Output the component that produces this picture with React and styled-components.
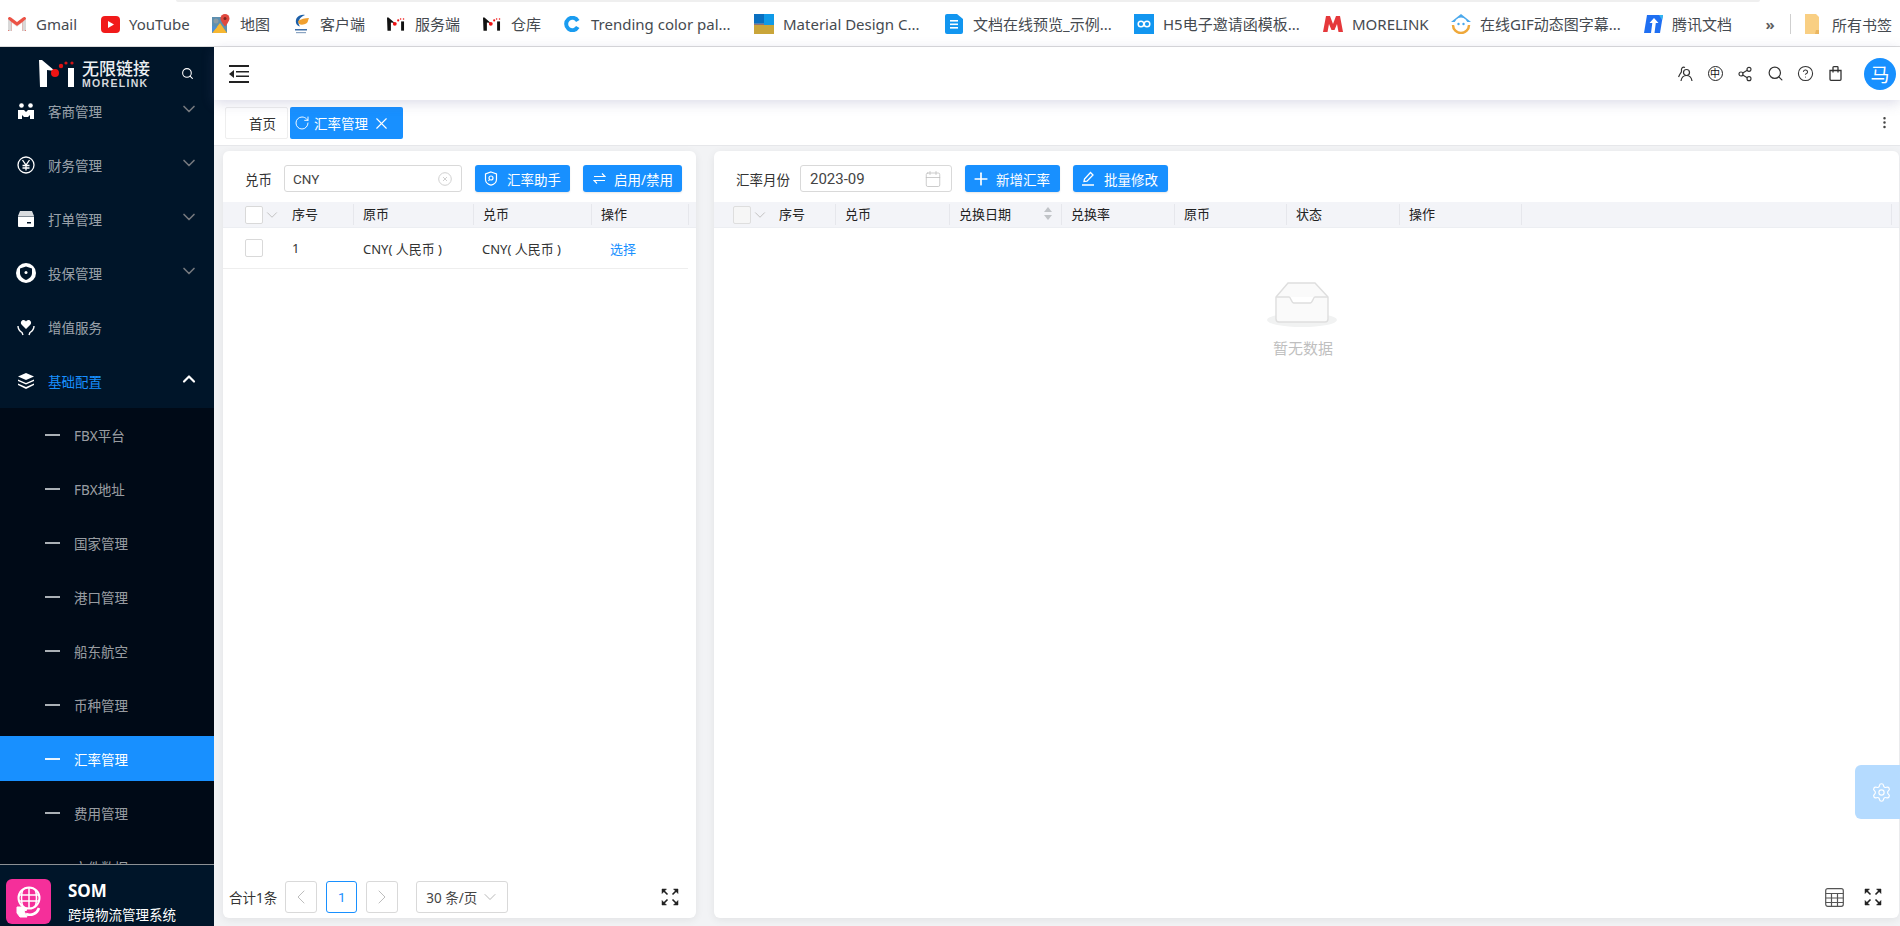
import React from "react";
import styled, { createGlobalStyle } from "styled-components";
import { Search, ChevronDown, ChevronUp, ChevronLeft, ChevronRight, X, RotateCw, Plus, Calendar, EllipsisVertical, Settings, Share2, CircleHelp } from "lucide-react";

const Global = createGlobalStyle`
  html, body { margin: 0; padding: 0; height: 100%; overflow: hidden; }
  * { box-sizing: border-box; }
  body { font-family: "Noto Sans", "Noto Sans CJK SC", sans-serif; background: #fff; }
`;

const Shell = styled.div`
  width: 1900px; height: 926px; display: flex; flex-direction: column; position: relative; overflow: hidden;
`;
const TopStrip = styled.div`
  height: 2px; margin-left: 176px; width: 1584px; background: #efefef; border-radius: 0 0 4px 4px; flex: none;
`;
const BookmarkBar = styled.div`
  height: 45px; flex: none; display: flex; align-items: center; padding-left: 7px; border-bottom: 1px solid #dcdcdc; background: #fff;
  font-size: 15px; color: #454a50; white-space: nowrap;
`;
const Bookmark = styled.div`
  width: ${p => p.$w}px; display: flex; align-items: center; gap: 9px; flex: none; line-height: 20px;
`;
const FavBox = styled.span`
  width: 20px; height: 20px; display: flex; align-items: center; justify-content: center; flex: none;
`;
const More = styled.span`
  width: 14px; text-align: center; margin-right: 13px; font-size: 15px; font-weight: 700; color: #5f5f5f; line-height: 20px;
`;
const BarSep = styled.span`
  width: 1px; height: 20px; background: #cfcfcf; margin-right: 13px;
`;
const AllMarks = styled.div`
  display: flex; align-items: center; gap: 12px;
`;
const Body = styled.div`
  flex: 1; display: flex; min-height: 0;
`;
const Sidebar = styled.aside`
  width: 214px; flex: none; display: flex; flex-direction: column; background: #001529; min-height: 0;
`;
const Brand = styled.div`
  height: 53px; flex: none; display: flex; align-items: flex-start; padding: 13px 0 0 39px; gap: 6px; position: relative; z-index: 1; background: #001529;
`;
const BrandText = styled.div`
  display: flex; flex-direction: column; width: 70px; color: #eceff2;
`;
const BrandCn = styled.span`
  font-size: 17px; line-height: 18px; font-weight: 500; letter-spacing: 0; white-space: nowrap;
`;
const BrandEn = styled.span`
  font-size: 10.5px; line-height: 11px; font-weight: 700; letter-spacing: 1.3px; font-family: "Liberation Sans", sans-serif; color: #d5d8dc; white-space: nowrap;
`;
const BrandSearch = styled.span`
  display: flex; margin: 7px 0 0 23px; color: #fff;
`;
const MenuScroll = styled.nav`
  flex: 1; min-height: 0; overflow: hidden;
`;
const MenuInner = styled.div`
  margin-top: -16px;
`;
const MenuItem = styled.div`
  height: 54px; display: flex; align-items: center; padding-left: 18px; gap: 14px; font-size: 13.5px;
  color: ${p => (p.$active ? "#1890ff" : "rgba(255,255,255,.62)")};
`;
const MenuIcon = styled.span`
  width: 16px; height: 20px; display: flex; align-items: center; justify-content: center; color: #fff; flex: none;
  svg { flex: none; }
`;
const Caret = styled.span`
  margin-left: auto; margin-right: 15px; display: flex; position: relative; top: -2px; color: ${p => (p.$open ? "#fff" : "#74787d")};
`;
const SubMenu = styled.div`
  background: #000a17; padding-top: 4px; display: flex; flex-direction: column; gap: 9px;
`;
const SubItem = styled.div`
  height: 45px; flex: none; display: flex; align-items: center; padding-left: 45px; gap: 14px; font-size: 13.5px;
  background: ${p => (p.$active ? "#1890ff" : "transparent")};
  color: ${p => (p.$active ? "#fff" : "rgba(255,255,255,.62)")};
`;
const Dash = styled.i`
  width: 15px; height: 2px; background: ${p => (p.$active ? "#e8f4ff" : "#aab0b6")}; flex: none;
`;
const SideFooter = styled.div`
  height: 62px; flex: none; display: flex; background: #001529; border-top: 1px solid #8c9094; padding: 14px 0 0 6px; gap: 17px;
`;
const AppBadge = styled.div`
  width: 45px; height: 45px; border-radius: 6px; background: #f52f9a; display: flex; align-items: center; justify-content: center; flex: none;
`;
const AppName = styled.div`
  display: flex; flex-direction: column; color: #fff;
`;
const AppTitle = styled.span`
  font-size: 17px; font-weight: 700; line-height: 24px;
`;
const AppDesc = styled.span`
  font-size: 13.5px; line-height: 18px; margin-top: 3px; white-space: nowrap;
`;
const Main = styled.div`
  flex: 1; min-width: 0; display: flex; flex-direction: column;
`;
const Header = styled.header`
  height: 53px; flex: none; display: flex; align-items: center; padding: 0 4px 0 15px; background: #fff; position: relative; z-index: 2;
  box-shadow: 0 3px 12px rgba(90,90,150,.22);
`;
const HeaderIcons = styled.div`
  margin-left: auto; display: flex; align-items: center; color: #333;
`;
const HeaderIcon = styled.span`
  width: 30px; display: flex; justify-content: center; align-items: center;
`;
const LangBadge = styled.span`
  width: 15px; height: 15px; border-radius: 50%; border: 1.3px solid #222; font-size: 10px; line-height: 12px; text-align: center; color: #111; display: block;
`;
const Avatar = styled.span`
  width: 32px; height: 32px; border-radius: 50%; background: #1890ff; color: #fff; font-size: 19px; display: flex; align-items: center; justify-content: center; margin-left: 14px;
`;
const TabsBar = styled.div`
  height: 46px; flex: none; display: flex; padding: 7px 8px 0 11px; gap: 2px; background: #fff; border-bottom: 1px solid #e6e7ea;
`;
const HomeTab = styled.div`
  width: 63px; height: 32px; border: 1px solid #eeeeee; border-radius: 2px; font-size: 13.5px; color: #333; display: flex; align-items: center; padding-left: 23px;
`;
const ActiveTab = styled.div`
  width: 113px; height: 32px; background: #1890ff; border-radius: 2px; color: #fff; font-size: 13.5px; display: flex; align-items: center; padding-left: 4px; gap: 4px;
`;
const TabMenu = styled.span`
  margin-left: auto; display: flex; height: 31px; align-items: center; color: #444;
`;
const Page = styled.div`
  flex: 1; min-height: 0; display: flex; background: #f2f3f5; padding: 5px 1px 8px 9px; gap: 18px;
`;
const Panel = styled.section`
  ${p => (p.$w ? `width:${p.$w}px;flex:none;` : "flex:1;min-width:0;")}
  background: #fff; border-radius: 6px; box-shadow: 0 2px 8px rgba(0,0,0,.07); display: flex; flex-direction: column; overflow: hidden;
`;
const Toolbar = styled.div`
  height: 51px; flex: none; padding: 4px 0 0 22px; display: flex; align-items: center; gap: 13px; font-size: 13.5px; color: #333;
`;
const Field = styled.div`
  display: flex; align-items: center; gap: ${p => p.$gap}px;
`;
const Label = styled.span`
  white-space: nowrap;
`;
const InputBox = styled.div`
  width: ${p => p.$w}px; height: 27px; border: 1px solid #d9d9d9; border-radius: 3px; padding: 0 9px 0 ${p => p.$pl}px; display: flex; align-items: center; justify-content: space-between; font-size: ${p => p.$fs}px; color: #444; font-family: Roboto, "Noto Sans", sans-serif;
`;
const ActionButton = styled.button`
  width: ${p => p.$w}px; height: 27px; border: 0; border-radius: 3px; background: #1890ff; color: #fff; font: inherit; font-size: 13.5px; display: flex; align-items: center; justify-content: flex-start; gap: ${p => p.$gap}px; padding: 0 0 0 ${p => p.$pl}px; box-shadow: 0 1px 2px rgba(0,0,0,.1);
`;
const TableHead = styled.div`
  height: 26px; flex: none; display: flex; align-items: center; background: #f3f4f8; border-bottom: 1px solid #eceef2; font-size: 13px; color: #222;
`;
const SelectCell = styled.div`
  width: ${p => p.$w}px; flex: none; display: flex; align-items: center; padding-left: ${p => p.$pl}px; color: #c0c0c0;
`;
const HeadCell = styled.div`
  width: ${p => p.$w}px; flex: none; height: 21px; line-height: 21px; padding-left: 9px; border-right: 1px solid #e6e7ec; display: flex; align-items: center; white-space: nowrap; position: relative;
`;
const Check = styled.span`
  width: 18px; height: 18px; border: 1px solid ${p => (p.$muted ? "#dedede" : "#d9d9d9")}; border-radius: 2px; background: ${p => (p.$muted ? "#f6f6f6" : "#fff")}; display: block; flex: none;
`;
const SortMark = styled.span`
  position: absolute; right: 9px; top: 3px; display: flex; flex-direction: column; gap: 3px;
`;
const SortUp = styled.i`
  width: 0; height: 0; border: 4px solid transparent; border-top: 0; border-bottom: 5px solid #c0c3c7;
`;
const SortDown = styled.i`
  width: 0; height: 0; border: 4px solid transparent; border-bottom: 0; border-top: 5px solid #c0c3c7;
`;
const Row = styled.div`
  height: 41px; flex: none; display: flex; align-items: center; border-bottom: 1px solid #eeeeee; margin-right: 8px; font-size: 13px; color: #333;
`;
const RowCell = styled.div`
  width: ${p => p.$w}px; flex: none; padding-left: ${p => p.$pl || 9}px; white-space: pre; color: ${p => (p.$link ? "#1890ff" : "inherit")};
`;
const Spacer = styled.div`
  flex: 1; min-height: 0;
`;
const Empty = styled.div`
  flex: 1; min-height: 0; display: flex; flex-direction: column; align-items: center; padding: 54px 7px 0 0; color: #bfbfbf; font-size: 15px;
`;
const EmptyText = styled.span`
  margin-top: 9px; line-height: 22px;
`;
const PanelFooter = styled.div`
  height: 42px; flex: none; display: flex; align-items: center; padding: 0 17px 0 6px; font-size: 13.5px; color: #333;
`;
const Total = styled.span`
  margin-right: 8px; white-space: nowrap;
`;
const PageBtn = styled.span`
  width: ${p => p.$w}px; height: 32px; border: 1px solid ${p => (p.$on ? "#1890ff" : "#d9d9d9")}; border-radius: 3px; display: flex; align-items: center; justify-content: center; margin-right: ${p => p.$mr}px; color: ${p => (p.$on ? "#1890ff" : "#bdbdbd")}; font-size: 13.5px; font-family: Roboto, sans-serif;
`;
const SizeSelect = styled.div`
  width: 92px; height: 32px; border: 1px solid #d9d9d9; border-radius: 3px; display: flex; align-items: center; padding-left: 9px; gap: 3px; color: #444; white-space: nowrap;
`;
const FooterTools = styled.div`
  margin-left: auto; display: flex; align-items: center; gap: 20px; color: #222;
`;
const GearTab = styled.div`
  position: absolute; right: 0; top: 765px; width: 45px; height: 54px; background: #b5dbff; border-radius: 6px 0 0 6px; display: flex; align-items: center; justify-content: center; color: #fff; padding-left: 8px; z-index: 3;
`;

/* ---- drawings ---- */
const MLogo = ({ size = 20 }) => (
  <svg width={size} height={size * 0.9} viewBox="0 0 37 27">
    <polygon points="0,0 3,0 16,11 8,10 8,27 1,27" fill="#111" />
    <rect x="29" y="8" width="6" height="19" fill="#111" />
    <circle cx="16" cy="13" r="4" fill="#e11" />
    <circle cx="23" cy="6" r="2.2" fill="#e11" />
    <circle cx="28" cy="3" r="1.6" fill="#e11" />
    <circle cx="34" cy="3" r="1.6" fill="#e11" />
  </svg>
);
const favicons = {
  gmail: (
    <svg width="20" height="16" viewBox="0 0 20 16">
      <path d="M1 15V3l9 7 9-7v12h-4V7l-5 4-5-4v8z" fill="#e9e9e9" />
      <path d="M1 15V2.500C1 1 3 .5 4 1.500L10 6l6-4.500c1-1 3-.5 3 1V15h-3.500V6L10 10 4.500 6v9z" fill="#ea4335" opacity=".92" />
      <path d="M4.500 6v9h-2L1 14V3z" fill="#d8d8d8" />
      <path d="M15.500 6v9h2l1.500-1V3z" fill="#d8d8d8" />
    </svg>
  ),
  youtube: (
    <svg width="19" height="19" viewBox="0 0 19 19">
      <rect x="0" y="1" width="19" height="17" rx="4" fill="#f11a1a" />
      <polygon points="7,6 13,9.500 7,13" fill="#fff" />
    </svg>
  ),
  map: (
    <svg width="20" height="20" viewBox="0 0 20 20">
      <rect x="1" y="3" width="15" height="16" fill="#5c8fb0" />
      <polygon points="1,19 9,9 16,19" fill="#f7b731" />
      <polygon points="1,19 1,12 6,13" fill="#4c8fd8" />
      <circle cx="5" cy="7" r="2.500" fill="#8a9aa5" />
      <path d="M14 0a4.500 4.500 0 0 1 4.500 4.500c0 3-4.500 8-4.500 8s-4.500-5-4.500-8A4.500 4.500 0 0 1 14 0z" fill="#e0483e" />
      <circle cx="14" cy="4.500" r="1.500" fill="#7d2620" />
    </svg>
  ),
  client: (
    <svg width="16" height="20" viewBox="0 0 16 20">
      <path d="M12 1C6 0 2 4 3 9c.5 2 2 3 4 3.500C4 9 6 3 12 1z" fill="#1c5fa8" />
      <path d="M5 7c3-2 7-3 11-3-1 2-1 4-2 5-3 2-6 2-8 1z" fill="#f0a030" />
      <rect x="2" y="15" width="12" height="1.500" fill="#3c6ea8" />
      <rect x="3" y="18" width="10" height="1.200" fill="#8aa4c2" />
    </svg>
  ),
  m: <MLogo size={18} />,
  c: (
    <svg width="16" height="16" viewBox="0 0 18 18">
      <path d="M15.500 5.500A7 7 0 1 0 15.500 12.500" fill="none" stroke="#1a9cf0" strokeWidth="4.500" />
    </svg>
  ),
  material: (
    <svg width="20" height="20" viewBox="0 0 20 20">
      <rect width="20" height="11" fill="#0f9ae8" />
      <rect x="0" width="10" height="9" fill="#0a6fc0" />
      <rect y="11" width="20" height="9" fill="#c9a53a" />
      <rect y="9.500" width="10" height="1.500" fill="#8d6e7a" />
    </svg>
  ),
  doc: (
    <svg width="18" height="20" viewBox="0 0 18 20">
      <path d="M2 0h10l6 5v13a2 2 0 0 1-2 2H2a2 2 0 0 1-2-2V2a2 2 0 0 1 2-2z" fill="#1296f0" />
      <rect x="5" y="6" width="8" height="1.600" fill="#fff" />
      <rect x="5" y="9.500" width="8" height="1.600" fill="#fff" />
      <rect x="5" y="13" width="8" height="1.600" fill="#fff" />
    </svg>
  ),
  h5: (
    <svg width="20" height="20" viewBox="0 0 20 20">
      <rect width="20" height="20" fill="#1296f0" />
      <circle cx="7" cy="10" r="2.800" fill="none" stroke="#fff" strokeWidth="1.500" />
      <circle cx="13" cy="10" r="2.800" fill="none" stroke="#fff" strokeWidth="1.500" />
    </svg>
  ),
  red: (
    <svg width="20" height="16" viewBox="0 0 20 16">
      <path d="M0 16 3 0h4l3 8 3-8h4l3 16h-4.500L14 8l-2.500 6h-3L6 8l-1.500 8z" fill="#e5383b" />
    </svg>
  ),
  house: (
    <svg width="20" height="20" viewBox="0 0 20 20">
      <path d="M10 0 20 8H0z" fill="#4aa8ec" />
      <path d="M2 11a8 8 0 0 0 16 0" fill="none" stroke="#efa83a" strokeWidth="2.500" />
      <circle cx="10" cy="10" r="6.500" fill="#fff" />
      <circle cx="7.500" cy="10" r="1.200" fill="#4aa8ec" />
      <circle cx="12.500" cy="10" r="1.200" fill="#4aa8ec" />
    </svg>
  ),
  tencent: (
    <svg width="19" height="18" viewBox="0 0 19 18">
      <polygon points="3,0 19,0 16,18 0,18" fill="#1f6ff2" />
      <polygon points="15,0 19,0 18,5" fill="#33b7f0" />
      <polygon points="10,3 14.500,8 11.800,8 10.500,18 7,18 8.300,8 5.500,8" fill="#fff" />
    </svg>
  ),
};
const Folder = () => (
  <svg width="16" height="21" viewBox="0 0 16 21">
    <path d="M1 0h11l3 3v17H1z" fill="#f9cf83" />
    <path d="M12 16h3v4h-4z" fill="#eab660" />
  </svg>
);
const BrandMark = () => (
  <svg width="37" height="27" viewBox="0 0 37 27">
    <polygon points="0,0 3,0 16,11 8,10 8,27 1,27" fill="#fff" />
    <rect x="29" y="8" width="6" height="19" fill="#fff" />
    <circle cx="16" cy="13" r="4" fill="#f01414" />
    <circle cx="22" cy="6" r="2.200" fill="#e01414" />
    <circle cx="27" cy="3" r="1.600" fill="#d01414" />
    <circle cx="33" cy="3" r="1.600" fill="#d01414" />
  </svg>
);
const PeopleIcon = () => (
  <svg width="16" height="16" viewBox="0 0 16 16" fill="#fff">
    <circle cx="3.500" cy="2.500" r="2.300" /><circle cx="12.500" cy="2.500" r="2.300" />
    <path d="M0 7h6l2 2 2-2h6v9h-4v-4l-2 2h-4l-2-2v4H0z" />
  </svg>
);
const YenIcon = () => (
  <svg width="18" height="18" viewBox="0 0 18 18" fill="none" stroke="#fff">
    <circle cx="9" cy="9" r="8" strokeWidth="1.300" />
    <path d="M5.500 4 9 9l3.500-5M5.500 9.500h7M5.500 12h7M9 9v5.500" strokeWidth="1.300" />
  </svg>
);
const BoxIcon = () => (
  <svg width="16" height="16" viewBox="0 0 16 16">
    <path d="M2 0h12l2 5H0z" fill="#fff" opacity=".85" />
    <path d="M0 5.500h16V15a1 1 0 0 1-1 1H1a1 1 0 0 1-1-1z" fill="#fff" />
    <rect x="9" y="11" width="4" height="1.500" fill="#001529" />
  </svg>
);
const ShieldIcon = () => (
  <svg width="20" height="20" viewBox="0 0 20 20">
    <circle cx="10" cy="10" r="10" fill="#fff" />
    <path d="M10 3.500l6 2v4.500c0 3.500-2.500 5.500-6 7-3.500-1.500-6-3.500-6-7V5.500z" fill="#001529" />
    <circle cx="10" cy="9.500" r="1.500" fill="#fff" />
  </svg>
);
const CareIcon = () => (
  <svg width="18" height="18" viewBox="0 0 18 18">
    <path d="M9 11 4.500 6.500C3 4.500 4.500 2 6.500 2 7.800 2 8.600 2.800 9 3.500 9.400 2.800 10.200 2 11.500 2c2 0 3.500 2.500 2 4.500z" fill="#fff" />
    <path d="M1 8c0 3.500 1.500 5 4 6.500L6 17M17 8c0 3.500-1.500 5-4 6.500L12 17" fill="none" stroke="#fff" strokeWidth="1.400" />
  </svg>
);
const LayersIcon = () => (
  <svg width="16" height="16" viewBox="0 0 16 16" fill="#fff">
    <path d="M8 0 16 3.500 8 7 0 3.500z" />
    <path d="M0 6.500 8 10l8-3.500v1.500L8 11.500 0 8z" />
    <path d="M0 10.500 8 14l8-3.500V12l-8 4-8-4z" />
  </svg>
);
const GlobeIcon = () => (
  <svg width="30" height="32" viewBox="0 0 30 32" fill="none" stroke="#fff">
    <circle cx="15" cy="12" r="10.500" strokeWidth="2" fill="#f52f9a" />
    <path d="M4.500 9h21M5 15h20M15 1.500v21M9 3c-2 5-2 13 0 18M21 3c2 5 2 13 0 18" strokeWidth="1.500" />
    <path d="M3 21h6l4 3-3 1 3 6H6l-3-4z" fill="#fff" stroke="#fff" />
    <path d="M12 28c5 2 11 0 13-6" strokeWidth="2.500" />
  </svg>
);
const CollapseIcon = () => (
  <svg width="20" height="18" viewBox="0 0 20 18" fill="#222">
    <rect width="20" height="2" /><rect y="16" width="20" height="2" />
    <rect x="7" y="6" width="13" height="1.500" /><rect x="7" y="10.500" width="13" height="1.500" />
    <path d="M5 5v8L0 9z" />
  </svg>
);
const PeopleLine = () => (
  <svg width="16" height="16" viewBox="0 0 16 16" fill="none" stroke="#333" strokeWidth="1.200">
    <circle cx="9.500" cy="6.500" r="3" />
    <path d="M4 15c.5-3.500 2.500-5.500 5.500-5.500s5 2 5.500 5.500" />
    <path d="M8 1.500C5.500 .5 4 2.500 4.500 5c.2 1.200-1 2-1.500 3-.4.700-1 2-1.500 3" />
  </svg>
);
const BagIcon = () => (
  <svg width="13" height="15" viewBox="0 0 13 15" fill="none" stroke="#333" strokeWidth="1.300">
    <path d="M1 4.500h11v8.800a1 1 0 0 1-1 1H2a1 1 0 0 1-1-1z" />
    <path d="M4 6.500V1.500a.8.8 0 0 1 .8-.8h3.400a.8.8 0 0 1 .8.8v5" />
  </svg>
);
const ShieldOutline = () => (
  <svg width="14" height="15" viewBox="0 0 14 15" fill="none" stroke="#fff" strokeWidth="1.200">
    <path d="M7 1l5.500 2v5.500C12.500 11 10 13.500 7 14.200 4 13.500 1.500 11 1.500 8.500V3z" />
    <circle cx="7" cy="7" r="2" />
    <path d="M5.500 8.500 4.500 10" />
  </svg>
);
const SwapIcon = () => (
  <svg width="13" height="13" viewBox="0 0 13 13" fill="none" stroke="#fff" strokeWidth="1.200">
    <path d="M1 4.500h11L9 1.500" />
    <path d="M12 8.500H1l3 3" />
  </svg>
);
const EditIcon = () => (
  <svg width="14" height="15" viewBox="0 0 14 15" fill="none" stroke="#fff" strokeWidth="1.300">
    <path d="M3 10.500 3.500 8 9.500 1.500l2.500 2.500-6 6.200z" />
    <path d="M1 14h12" />
  </svg>
);
const ClearDot = () => (
  <svg width="14" height="14" viewBox="0 0 14 14" fill="none" stroke="#d0d0d0">
    <circle cx="7" cy="7" r="6.300" />
    <path d="M5 5l4 4M9 5l-4 4" />
  </svg>
);
const ExpandIcon = () => (
  <svg width="18" height="18" viewBox="0 0 18 18" fill="#222" stroke="#222" strokeWidth="1.600">
    <path d="M2 2l4.500 4.500M16 2l-4.500 4.500M2 16l4.500-4.500M16 16l-4.500-4.500" fill="none" />
    <path d="M1 1h4.500L1 5.500zM17 1h-4.500L17 5.500zM1 17h4.500L1 12.500zM17 17h-4.500L17 12.500z" strokeWidth=".5" />
  </svg>
);
const GridIcon = () => (
  <svg width="19" height="19" viewBox="0 0 19 19" fill="none" stroke="#555" strokeWidth="1.200">
    <rect x=".7" y=".7" width="17.600" height="17.600" rx="2" />
    <path d="M.7 5.500h17.600M.7 10h17.600M.7 14.500h17.600M6.500 5.500v13M12.500 5.500v13" />
  </svg>
);
const InboxArt = () => (
  <svg width="72" height="46" viewBox="0 0 72 46">
    <ellipse cx="35" cy="38" rx="35" ry="7" fill="#f1f2f2" />
    <path d="M21 1h27l13 14v22a3 3 0 0 1-3 3H12a3 3 0 0 1-3-3V15z" fill="#fafafa" stroke="#dedede" strokeWidth="1.400" />
    <path d="M9 15h13c2 0 2 6 5 6h16c3 0 3-6 5-6h13" fill="#fff" stroke="#dedede" strokeWidth="1.400" />
  </svg>
);

const marks = [
  ["gmail", "Gmail", 93], ["youtube", "YouTube", 111], ["map", "地图", 80], ["client", "客户端", 95],
  ["m", "服务端", 96], ["m", "仓库", 80], ["c", "Trending color pal...", 192], ["material", "Material Design C...", 190],
  ["doc", "文档在线预览_示例...", 190], ["h5", "H5电子邀请函模板...", 189], ["red", "MORELINK", 128],
  ["house", "在线GIF动态图字幕...", 192], ["tencent", "腾讯文档", 120],
];
const topMenu = [
  [<PeopleIcon />, "客商管理"], [<YenIcon />, "财务管理"], [<BoxIcon />, "打单管理"], [<ShieldIcon />, "投保管理"],
];
const subMenu = ["FBX平台", "FBX地址", "国家管理", "港口管理", "船东航空", "币种管理", "汇率管理", "费用管理", "文件数据"];

export default function App() {
  return (
    <Shell>
      <Global />
      <TopStrip />
      <BookmarkBar>
        {marks.map(([icon, label, w], i) => (
          <Bookmark key={i} $w={w}>
            <FavBox>{favicons[icon]}</FavBox>
            {label}
          </Bookmark>
        ))}
        <More>»</More>
        <BarSep />
        <AllMarks><Folder />所有书签</AllMarks>
      </BookmarkBar>
      <Body>
        <Sidebar>
          <Brand>
            <BrandMark />
            <BrandText>
              <BrandCn>无限链接</BrandCn>
              <BrandEn>MORELINK</BrandEn>
            </BrandText>
            <BrandSearch><Search size={13} /></BrandSearch>
          </Brand>
          <MenuScroll>
            <MenuInner>
              {topMenu.map(([icon, label]) => (
                <MenuItem key={label}>
                  <MenuIcon>{icon}</MenuIcon>
                  {label}
                  <Caret><ChevronDown size={20} strokeWidth={2} /></Caret>
                </MenuItem>
              ))}
              <MenuItem>
                <MenuIcon><CareIcon /></MenuIcon>
                增值服务
              </MenuItem>
              <MenuItem $active>
                <MenuIcon><LayersIcon /></MenuIcon>
                基础配置
                <Caret $open><ChevronUp size={20} strokeWidth={2.6} /></Caret>
              </MenuItem>
              <SubMenu>
                {subMenu.map(label => (
                  <SubItem key={label} $active={label === "汇率管理"}>
                    <Dash $active={label === "汇率管理"} />
                    {label}
                  </SubItem>
                ))}
              </SubMenu>
            </MenuInner>
          </MenuScroll>
          <SideFooter>
            <AppBadge><GlobeIcon /></AppBadge>
            <AppName>
              <AppTitle>SOM</AppTitle>
              <AppDesc>跨境物流管理系统</AppDesc>
            </AppName>
          </SideFooter>
        </Sidebar>
        <Main>
          <Header>
            <CollapseIcon />
            <HeaderIcons>
              <HeaderIcon><PeopleLine /></HeaderIcon>
              <HeaderIcon><LangBadge>中</LangBadge></HeaderIcon>
              <HeaderIcon><Share2 size={16} strokeWidth={1.7} /></HeaderIcon>
              <HeaderIcon><Search size={17} strokeWidth={1.7} /></HeaderIcon>
              <HeaderIcon><CircleHelp size={17} strokeWidth={1.5} /></HeaderIcon>
              <HeaderIcon><BagIcon /></HeaderIcon>
              <Avatar>马</Avatar>
            </HeaderIcons>
          </Header>
          <TabsBar>
            <HomeTab>首页</HomeTab>
            <ActiveTab>
              <RotateCw size={16} strokeWidth={1.4} />
              汇率管理
              <X size={19} strokeWidth={1.4} />
            </ActiveTab>
            <TabMenu><EllipsisVertical size={15} /></TabMenu>
          </TabsBar>
          <Page>
            <Panel $w={473}>
              <Toolbar>
                <Field $gap={12}>
                  <Label>兑币</Label>
                  <InputBox $w={178} $pl={8} $fs={13.5}>CNY<ClearDot /></InputBox>
                </Field>
                <ActionButton $w={95} $pl={9} $gap={9}><ShieldOutline />汇率助手</ActionButton>
                <ActionButton $w={99} $pl={10} $gap={8}><SwapIcon />启用/禁用</ActionButton>
              </Toolbar>
              <TableHead>
                <SelectCell $w={60} $pl={22}><Check /><ChevronDown size={18} strokeWidth={1.3} /></SelectCell>
                <HeadCell $w={71}>序号</HeadCell>
                <HeadCell $w={120}>原币</HeadCell>
                <HeadCell $w={118}>兑币</HeadCell>
                <HeadCell $w={97}>操作</HeadCell>
              </TableHead>
              <Row>
                <SelectCell $w={60} $pl={22}><Check /></SelectCell>
                <RowCell $w={71}>1</RowCell>
                <RowCell $w={119}>CNY( 人民币 )</RowCell>
                <RowCell $w={118}>CNY( 人民币 )</RowCell>
                <RowCell $w={90} $pl={19} $link>选择</RowCell>
              </Row>
              <Spacer />
              <PanelFooter>
                <Total>合计1条</Total>
                <PageBtn $w={32} $mr={9}><ChevronLeft size={24} strokeWidth={1} /></PageBtn>
                <PageBtn $w={31} $mr={9} $on>1</PageBtn>
                <PageBtn $w={32} $mr={18}><ChevronRight size={24} strokeWidth={1} /></PageBtn>
                <SizeSelect>30 条/页<ChevronDown size={20} strokeWidth={1} color="#aaa" /></SizeSelect>
                <FooterTools><ExpandIcon /></FooterTools>
              </PanelFooter>
            </Panel>
            <Panel>
              <Toolbar>
                <Field $gap={10}>
                  <Label>汇率月份</Label>
                  <InputBox $w={152} $pl={9} $fs={15}>2023-09<Calendar size={18} strokeWidth={1} color="#bbb" /></InputBox>
                </Field>
                <ActionButton $w={95} $pl={6} $gap={5}><Plus size={20} strokeWidth={2} />新增汇率</ActionButton>
                <ActionButton $w={95} $pl={8} $gap={9}><EditIcon />批量修改</ActionButton>
              </Toolbar>
              <TableHead>
                <SelectCell $w={56} $pl={19}><Check $muted /><ChevronDown size={18} strokeWidth={1.3} /></SelectCell>
                <HeadCell $w={66}>序号</HeadCell>
                <HeadCell $w={114}>兑币</HeadCell>
                <HeadCell $w={112}>兑换日期<SortMark><SortUp /><SortDown /></SortMark></HeadCell>
                <HeadCell $w={113}>兑换率</HeadCell>
                <HeadCell $w={112}>原币</HeadCell>
                <HeadCell $w={113}>状态</HeadCell>
                <HeadCell $w={122}>操作</HeadCell>
                <HeadCell $w={370} />
              </TableHead>
              <Empty>
                <InboxArt />
                <EmptyText>暂无数据</EmptyText>
              </Empty>
              <PanelFooter>
                <FooterTools><GridIcon /><ExpandIcon /></FooterTools>
              </PanelFooter>
            </Panel>
          </Page>
        </Main>
      </Body>
      <GearTab><Settings size={21} strokeWidth={1.3} /></GearTab>
    </Shell>
  );
}
